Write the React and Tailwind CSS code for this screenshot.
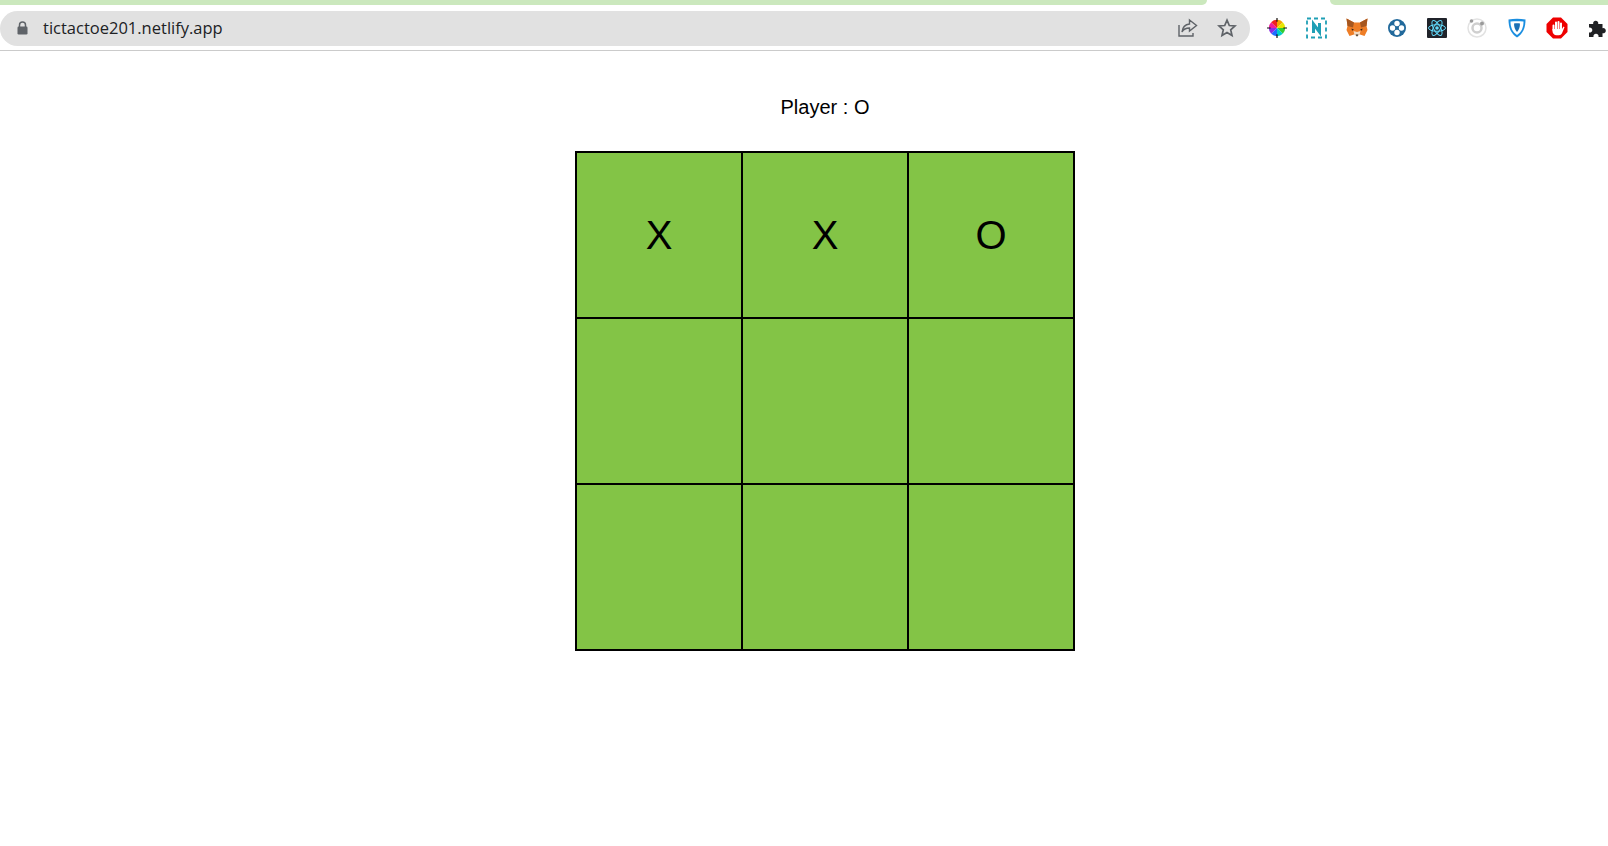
const cells = ['X', 'X', 'O', '', '', '', '', '', ''];

const ColorWheel = () => (
  <svg width="20" height="20" viewBox="0 0 22 22">
    <path d="M11 11 L11 2 A9 9 0 0 1 17.400 4.600 Z" fill="#f5a300" />
    <path d="M11 11 L17.400 4.600 A9 9 0 0 1 20 11 Z" fill="#e6e600" />
    <path d="M11 11 L20 11 A9 9 0 0 1 17.400 17.400 Z" fill="#33cc33" />
    <path d="M11 11 L17.400 17.400 A9 9 0 0 1 11 20 Z" fill="#00cccc" />
    <path d="M11 11 L11 20 A9 9 0 0 1 4.600 17.400 Z" fill="#1e6cff" />
    <path d="M11 11 L4.600 17.400 A9 9 0 0 1 2 11 Z" fill="#8a2be2" />
    <path d="M11 11 L2 11 A9 9 0 0 1 4.600 4.600 Z" fill="#ee1c9c" />
    <path d="M11 11 L4.600 4.600 A9 9 0 0 1 11 2 Z" fill="#ee2020" />
    <path d="M11 0v4M11 18v4M0 11h4M18 11h4" stroke="#111" strokeWidth="1.300" />
  </svg>
);

const NotionBox = () => (
  <svg width="22" height="22" viewBox="0 0 22 22" fill="none">
    <rect x="1" y="1.500" width="19" height="19" stroke="#1f9fb5" strokeWidth="1.800" strokeDasharray="4 3" />
    <path d="M7.500 16V7L13.500 15V6" stroke="#1f9fb5" strokeWidth="3" />
  </svg>
);

const Fox = () => (
  <svg width="22" height="22" viewBox="0 0 22 22">
    <path d="M0.500 1.500L8 5.500h6l7.500-4L20.500 9l1 4-3 6-4.500-1.500h-6L3.500 19l-3-6 1-4z" fill="#ee7d26" />
    <path d="M0.500 1.500L8 5.500 7 10.500 1.500 9zM21.500 1.500L14 5.500l1 5 5.500-1.500z" fill="#a5561f" />
    <path d="M7.500 14l3.500 1 3.500-1-1 4-2.500 2-2.500-2z" fill="#f3dcc5" />
    <path d="M5.500 11.500l2.500 1-2 1.200zM16.500 11.500l-2.500 1 2 1.200z" fill="#33261c" />
    <path d="M9.500 17.500h3L11 19.500z" fill="#33261c" />
  </svg>
);

const BlueCross = () => (
  <svg width="20" height="20" viewBox="0 0 20 20">
    <circle cx="10" cy="10" r="9" fill="#21699b" />
    <circle cx="10" cy="5.500" r="2.700" fill="#fff" />
    <circle cx="10" cy="14.500" r="2.700" fill="#fff" />
    <circle cx="5.500" cy="10" r="2.700" fill="#fff" />
    <circle cx="14.500" cy="10" r="2.700" fill="#fff" />
  </svg>
);

const ReactLogo = () => (
  <svg width="20" height="20" viewBox="0 0 20 20">
    <rect width="20" height="20" rx="1" fill="#20232a" />
    <g fill="none" stroke="#61dafb" strokeWidth="1">
      <ellipse cx="10" cy="10" rx="8.500" ry="3.300" />
      <ellipse cx="10" cy="10" rx="8.500" ry="3.300" transform="rotate(60 10 10)" />
      <ellipse cx="10" cy="10" rx="8.500" ry="3.300" transform="rotate(120 10 10)" />
    </g>
    <circle cx="10" cy="10" r="1.800" fill="#61dafb" />
  </svg>
);

const GreyRing = () => (
  <svg width="20" height="20" viewBox="0 0 20 20" fill="none">
    <circle cx="10" cy="10" r="9" stroke="#e2e2e2" strokeWidth="1.500" />
    <circle cx="10" cy="10" r="4.500" stroke="#cfcfcf" strokeWidth="2.500" />
    <circle cx="4.500" cy="3" r="1.800" fill="#9a9a9a" />
    <circle cx="15" cy="5.500" r="2" fill="#9a9a9a" />
  </svg>
);

const Shield = () => (
  <svg width="20" height="20" viewBox="0 0 20 20" fill="none">
    <path d="M1.500 1.500C7 0.500 13 0.500 18.500 1.500C18.500 10 16 15.500 10 19.500C4 15.500 1.500 10 1.500 1.500Z" fill="#1a8ee0" />
    <path d="M3.500 3.500C8 3 12 3 16.500 3.500C16.500 9.500 14.500 14 10 17C5.500 14 3.500 9.500 3.500 3.500Z" fill="#fff" />
    <path d="M7 5.500C9 5.200 11 5.200 13 5.500C13 9 12 12 10 14C8 12 7 9 7 5.500Z" fill="#1a6fb5" />
  </svg>
);

const StopHand = () => (
  <svg width="22" height="22" viewBox="0 0 22 22">
    <path d="M7 0.500h8L21.500 7v8L15 21.500H7L0.500 15V7z" fill="#ee0000" />
    <g stroke="#fff" strokeWidth="2" strokeLinecap="round">
      <path d="M7.500 8.500V13M10 5.500V12M12.500 5V12M15 6.500V13" />
    </g>
    <path d="M6.500 12h9.500l1.500-2.500 1 .8-2.500 6c-.6 1.300-1.800 2-3 2h-2.500c-2.200 0-4-1.800-4-4z" fill="#fff" />
  </svg>
);

const Puzzle = () => (
  <svg width="18" height="18" viewBox="0 0 18 18">
    <path d="M1 5h4.200a2.600 2.600 0 1 1 5 0H14.500v4.200a2.600 2.600 0 1 1 0 5V18H10.500a2.600 2.600 0 1 0-5 0H1v-4.500a2.600 2.600 0 1 0 0-5z" fill="#202124" />
  </svg>
);

const extensions = [ColorWheel, NotionBox, Fox, BlueCross, ReactLogo, GreyRing, Shield, StopHand, Puzzle];

const App = () => {
  return (
    <div className="min-h-[846px] bg-white font-['Liberation_Sans',Arial,sans-serif] text-black overflow-hidden">
      {/* tab strip */}
      <div className="flex h-[5px] bg-white">
        <div className="w-[1207px] bg-[#cbe8bd] rounded-br-lg" />
        <div className="flex-1 ml-[123px] bg-[#cbe8bd] rounded-bl-lg" />
      </div>

      {/* toolbar */}
      <div className="flex items-center h-[46px] border-b border-[#cbcbcb] pt-[1px]">
        <div className="flex items-center w-[1250px] h-[35px] rounded-full bg-[#e1e1e1] shrink-0">
          <svg className="ml-[17px]" width="11" height="14" viewBox="0 0 11 14">
            <path d="M2.500 6V4a3 3 0 0 1 6 0v2" fill="none" stroke="#5f6368" strokeWidth="1.500" />
            <rect x="0.500" y="5.500" width="10" height="8" rx="1.200" fill="#5f6368" />
          </svg>
          <span className="ml-[15px] text-[16.500px] text-[#202124] font-['Open_Sans',sans-serif]">tictactoe201.netlify.app</span>
          <div className="ml-auto mr-[13px] flex items-center gap-[19px]">
            <svg width="20" height="20" viewBox="0 0 20 20" fill="none" stroke="#5f6368" strokeWidth="1.400">
              <path d="M1 7v11h14v-3" />
              <path d="M11.500 2l7 5.500-7 5.500V10c-3.500 0-6 1-7.500 4 .5-4.500 3-7.500 7.500-8z" />
            </svg>
            <svg width="20" height="20" viewBox="0 0 20 20" fill="none" stroke="#5f6368" strokeWidth="1.700">
              <path d="M10 2.200l2.300 5.300 5.700.5-4.300 3.800 1.300 5.600-5-3-5 3 1.300-5.600L2 8l5.700-.5z" />
            </svg>
          </div>
        </div>
        <div className="flex items-center ml-[7px]">
          {extensions.map((Icon, i) => (
            <div key={i} className="w-[40px] flex items-center justify-center shrink-0">
              <Icon />
            </div>
          ))}
        </div>
      </div>

      {/* game */}
      <div className="flex flex-col items-center pl-[42px]">
        <p className="mt-[45px] h-[23px] text-[20px] leading-[23px]">Player : O</p>
        <div className="mt-[32px] grid grid-cols-[repeat(3,166px)] border border-black w-[500px] h-[500px]">
          {cells.map((cell, i) => (
            <div key={i} className="flex items-center justify-center w-[166px] h-[166px] border border-black bg-[#83c446] text-[40px]">
              {cell}
            </div>
          ))}
        </div>
      </div>
    </div>
  );
};

export default App;
